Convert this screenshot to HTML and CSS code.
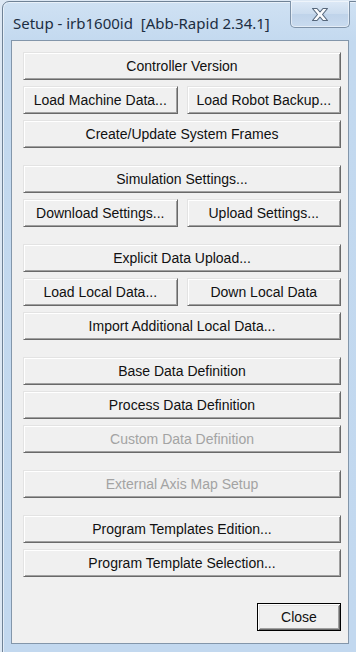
FILE: index.html
```html
<!DOCTYPE html>
<html>
<head>
<meta charset="utf-8">
<link rel="stylesheet" href="styles.css">
</head>
<body>
<div class="window">
  <div class="titlebar">
    <span class="title">Setup - irb1600id&nbsp; [Abb-Rapid 2.34.1]</span>
    <div class="caption-close">
      <svg width="18" height="15" viewBox="0 0 18 15"><polygon points="1.5,1.5 6,1.5 9,5 12,1.5 16.5,1.5 11.5,7.5 16.5,13.5 12,13.5 9,10 6,13.5 1.5,13.5 6.5,7.5" fill="#fbfcfe" stroke="#56677b" stroke-width="1.1" stroke-linejoin="round"/></svg>
    </div>
  </div>
  <div class="client">
    <div class="group">
      <button class="btn">Controller Version</button>
      <div class="row">
        <button class="btn">Load Machine Data...</button>
        <button class="btn">Load Robot Backup...</button>
      </div>
      <button class="btn">Create/Update System Frames</button>
    </div>
    <div class="group">
      <button class="btn">Simulation Settings...</button>
      <div class="row">
        <button class="btn">Download Settings...</button>
        <button class="btn">Upload Settings...</button>
      </div>
    </div>
    <div class="group">
      <button class="btn">Explicit Data Upload...</button>
      <div class="row">
        <button class="btn">Load Local Data...</button>
        <button class="btn">Down Local Data</button>
      </div>
      <button class="btn">Import Additional Local Data...</button>
    </div>
    <div class="group">
      <button class="btn">Base Data Definition</button>
      <button class="btn">Process Data Definition</button>
      <button class="btn disabled">Custom Data Definition</button>
    </div>
    <div class="group">
      <button class="btn disabled">External Axis Map Setup</button>
    </div>
    <div class="group">
      <button class="btn">Program Templates Edition...</button>
      <button class="btn">Program Template Selection...</button>
    </div>
    <div class="footer">
      <button class="btn default">Close</button>
    </div>
  </div>
</div>
</body>
</html>
```

FILE: styles.css
```css
html, body {
  margin: 0;
  padding: 0;
}
body {
  width: 356px;
  height: 652px;
  overflow: hidden;
  background: #dde8f4;
}
.window {
  margin: 1px 0 0 2px;
  width: 360px;
  height: 660px;
  box-sizing: border-box;
  border: 1px solid #6f8296;
  border-radius: 7px 7px 0 0;
  background: linear-gradient(to bottom, #cfe1f3 0px, #c3d9ef 40px, #c2d8ef 100%);
  box-shadow: inset 0 0 0 1px rgba(255, 255, 255, 0.55);
  display: flex;
  flex-direction: column;
}
.titlebar {
  height: 38px;
  display: flex;
  align-items: flex-start;
}
.title {
  font-family: "Noto Sans", "Open Sans", sans-serif;
  font-size: 15px;
  color: #1c2e42;
  padding: 11px 0 0 10px;
  line-height: 20px;
  white-space: nowrap;
}
.caption-close {
  margin-left: auto;
  margin-right: 11px;
  margin-top: -1px;
  width: 60px;
  height: 27px;
  box-sizing: border-box;
  border: 1px solid #7f93a9;
  border-top: none;
  border-radius: 0 0 5px 5px;
  background: linear-gradient(to bottom, #dde9f6 0%, #cbdcef 50%, #bfd3ea 51%, #c9dbef 100%);
  box-shadow: inset 0 0 0 1px rgba(255, 255, 255, 0.5);
  display: flex;
  align-items: center;
  justify-content: center;
}
.client {
  margin-left: 8px;
  width: 338px;
  height: 604px;
  box-sizing: border-box;
  border: 1px solid #8396aa;
  background: #f0f0f0;
  padding: 11px 0 0 11px;
  display: flex;
  flex-direction: column;
  gap: 17px;
}
.group {
  width: 318px;
  display: flex;
  flex-direction: column;
  gap: 6px;
}
.row {
  display: flex;
  gap: 9px;
}
.row .btn {
  flex: 1;
}
.btn {
  height: 28px;
  box-sizing: border-box;
  margin: 0;
  padding: 0;
  background: #f0f0f0;
  border: 1px solid;
  border-color: #e3e3e3 #696969 #696969 #e3e3e3;
  box-shadow: inset 1px 1px #ffffff, inset -1px -1px #a0a0a0;
  font-family: "Liberation Sans", Arial, sans-serif;
  font-size: 14px;
  line-height: 24px;
  color: #111;
  text-align: center;
}
.btn.disabled {
  color: #a3a3a3;
}
.footer {
  width: 318px;
  margin-top: 9px;
  display: flex;
  justify-content: flex-end;
}
.btn.default {
  width: 84px;
  border-color: #000;
  box-shadow: inset 1px 1px #ffffff, inset -1px -1px #696969, inset 2px 2px #e3e3e3, inset -2px -2px #a0a0a0;
}
```
